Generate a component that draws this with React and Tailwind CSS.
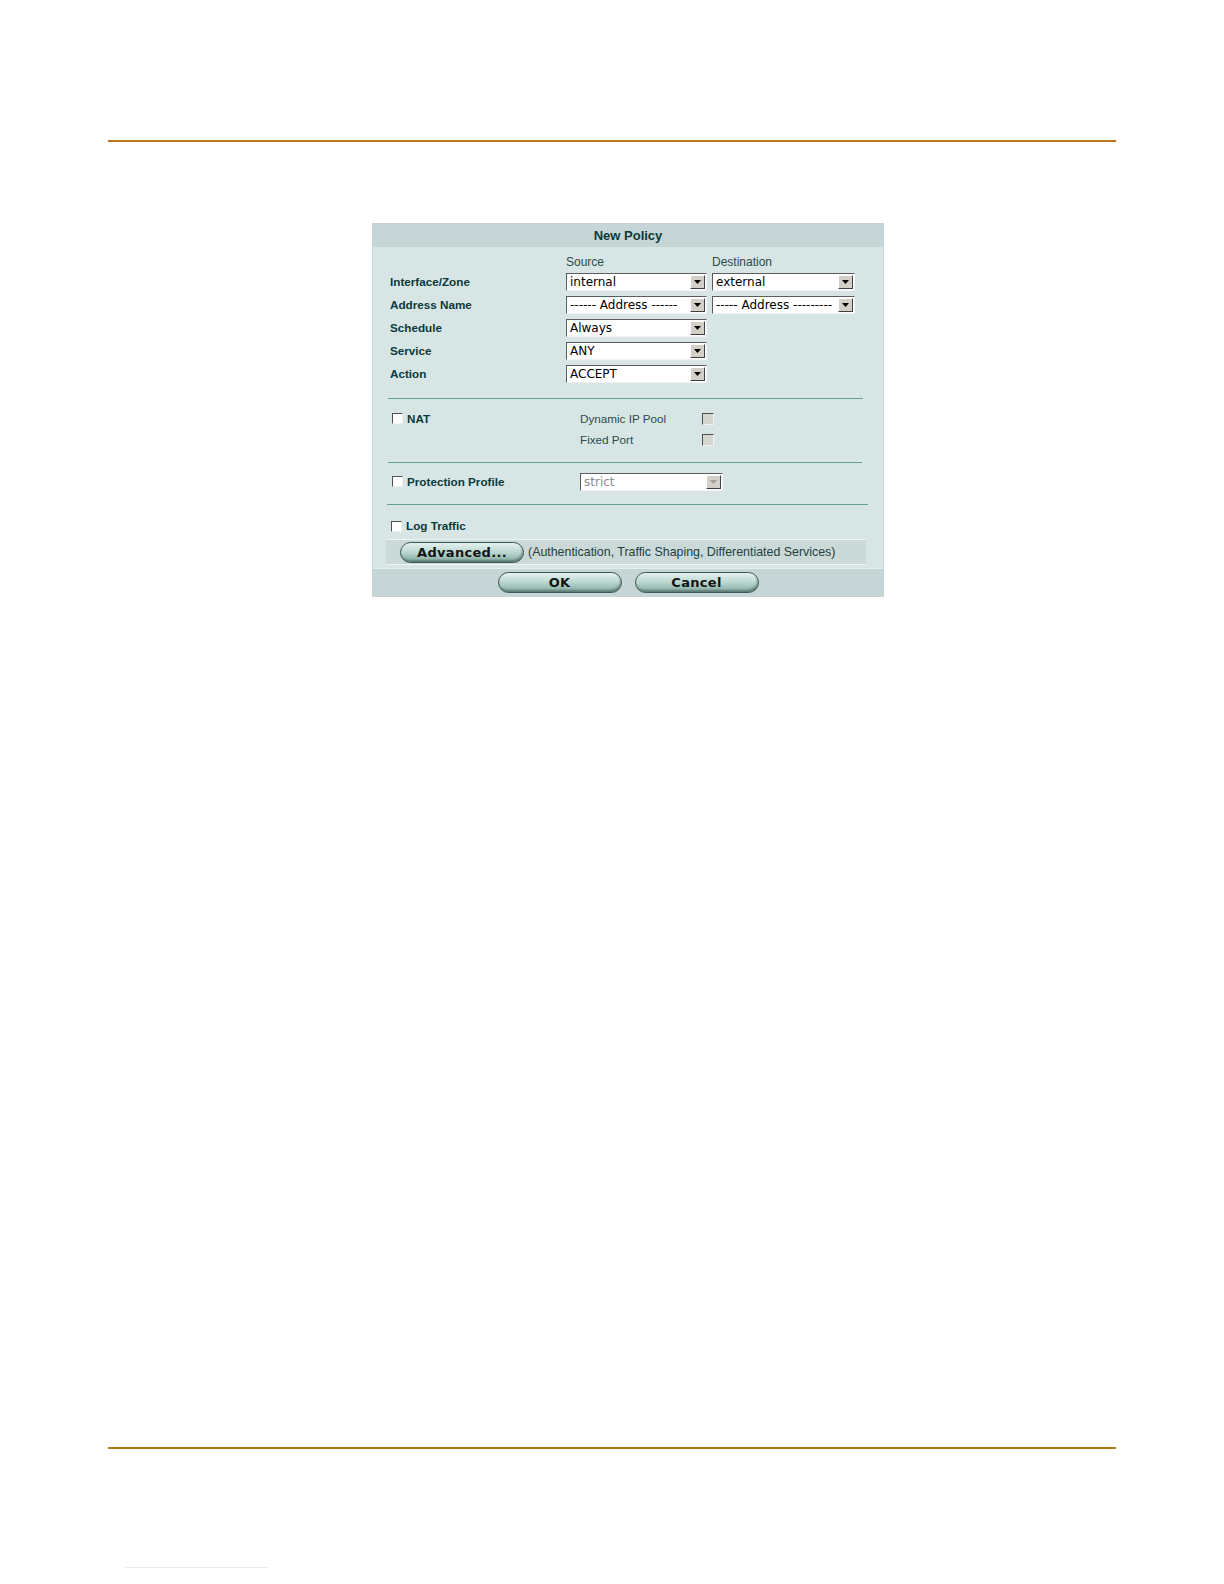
import React from 'react';

const Arrow = ({ disabled }) => (
    <div className="my-px mr-px flex w-[15px] items-center justify-center border border-t-[#ffffff] border-l-[#ffffff] border-b-[#404040] border-r-[#404040] bg-[#d4d0c8]">
        <svg width="7" height="4" viewBox="0 0 7 4">
            <polygon points="0,0 7,0 3.5,4" fill={disabled ? '#a0a0a0' : '#000000'} />
        </svg>
    </div>
);

const Select = ({ value, wide, disabled }) => (
    <div className={`flex h-[18px] ${wide ? 'w-[143px]' : 'w-[141px]'} border border-t-[#5c5c5c] border-l-[#5c5c5c] border-b-[#f2f2f2] border-r-[#f2f2f2] bg-white`}>
        <div className={`flex-1 overflow-hidden whitespace-nowrap pl-[3px] font-['DejaVu_Sans',sans-serif] text-[12px] leading-[16px] ${disabled ? 'text-[#8c8c8c]' : 'text-black'}`}>
            {value}
        </div>
        <Arrow disabled={disabled} />
    </div>
);

const Box = ({ disabled }) => (
    <span className={`block border border-t-[#505050] border-l-[#505050] border-b-[#f0f0f0] border-r-[#f0f0f0] ${disabled ? 'h-[12px] w-[12px] bg-[#d6d6d0]' : 'h-[11px] w-[11px] bg-white'}`} />
);

const PillButton = ({ children }) => (
    <button className="flex h-[21px] w-[124px] items-center justify-center rounded-full border border-[#3a5852] bg-linear-to-b from-[#e4f2ef] via-[#bad6cf] to-[#80a9a0] font-['DejaVu_Sans',sans-serif] text-[13px] font-bold leading-none tracking-[0.3px] text-[#141414] shadow-[inset_-1px_-2px_2px_rgba(0,0,0,0.28)]">
        {children}
    </button>
);

const rows = [
    { label: 'Interface/Zone', src: 'internal', dst: 'external' },
    { label: 'Address Name', src: '------ Address ------', dst: '----- Address ---------' },
    { label: 'Schedule', src: 'Always' },
    { label: 'Service', src: 'ANY' },
    { label: 'Action', src: 'ACCEPT' },
];

const NewPolicy = () => (
    <div className="ml-[372px] mt-[81px] w-[512px] border border-[#c7d2d2] bg-[#d7e5e5]">
        <div className="h-[23px] bg-[#c6d5d5] text-center text-[13px] font-bold leading-[23px] text-[#0b3a3a]">
            New Policy
        </div>

        <div className="mt-[8px] grid h-[14px] grid-cols-[176px_146px_auto] pl-[17px] text-[12px] leading-[14px] text-[#2a4c4c]">
            <span />
            <span>Source</span>
            <span>Destination</span>
        </div>

        <div className="mt-px pl-[17px]">
            {rows.map((row) => (
                <div key={row.label} className="grid h-[23px] grid-cols-[176px_146px_auto] items-center">
                    <span className="text-[11.7px] font-bold text-[#0b3a3a]">{row.label}</span>
                    <Select value={row.src} />
                    {row.dst ? <Select value={row.dst} wide /> : <span />}
                </div>
            ))}
        </div>

        <div className="ml-[15px] mt-[13px] h-px w-[475px] bg-[#63a096]" />

        <div className="mt-[9px] pl-[19px]">
            <div className="flex h-[21px] items-center">
                <div className="flex w-[188px] items-center gap-[4px]">
                    <Box />
                    <span className="text-[11.7px] font-bold text-[#0b3a3a]">NAT</span>
                </div>
                <span className="w-[122px] text-[11.7px] text-[#2a4c4c]">Dynamic IP Pool</span>
                <Box disabled />
            </div>
            <div className="flex h-[21px] items-center">
                <div className="w-[188px]" />
                <span className="w-[122px] text-[11.7px] text-[#2a4c4c]">Fixed Port</span>
                <Box disabled />
            </div>
        </div>

        <div className="ml-[15px] mt-[12px] h-px w-[474px] bg-[#63a096]" />

        <div className="mt-[9px] flex h-[20px] items-center pl-[19px]">
            <div className="flex w-[188px] items-center gap-[4px]">
                <Box />
                <span className="text-[11.7px] font-bold text-[#0b3a3a]">Protection Profile</span>
            </div>
            <Select value="strict" wide disabled />
        </div>

        <div className="ml-[14px] mt-[12px] h-px w-[481px] bg-[#63a096]" />

        <div className="mt-[11px] flex h-[20px] items-center gap-[4px] pl-[18px]">
            <Box />
            <span className="text-[11.7px] font-bold text-[#0b3a3a]">Log Traffic</span>
        </div>

        <div className="ml-[13px] mt-[3px] flex h-[26px] w-[480px] items-center gap-[4px] border-y border-[#eef5f5] bg-[#cbd9d9] pl-[14px]">
            <PillButton>Advanced...</PillButton>
            <span className="text-[12.4px] text-[#1f4040]">(Authentication, Traffic Shaping, Differentiated Services)</span>
        </div>

        <div className="mt-[3px] flex h-[28px] items-center justify-center gap-[13px] border-t border-[#e4eeee] bg-[#c6d5d5]">
            <PillButton>OK</PillButton>
            <PillButton>Cancel</PillButton>
        </div>
    </div>
);

const App = () => (
    <div className="h-[1584px] w-[1224px] overflow-hidden bg-white pt-[140px] font-['Liberation_Sans',Arial,sans-serif]">
        <div className="ml-[108px] h-[2px] w-[1008px] bg-[#b8761c]" />
        <NewPolicy />
        <div className="ml-[108px] mt-[850px] h-[2px] w-[1008px] bg-[#b07a1c]" />
        <div className="ml-[125px] mt-[118px] h-px w-[143px] bg-[#e6ebf4]" />
    </div>
);

export default App;
